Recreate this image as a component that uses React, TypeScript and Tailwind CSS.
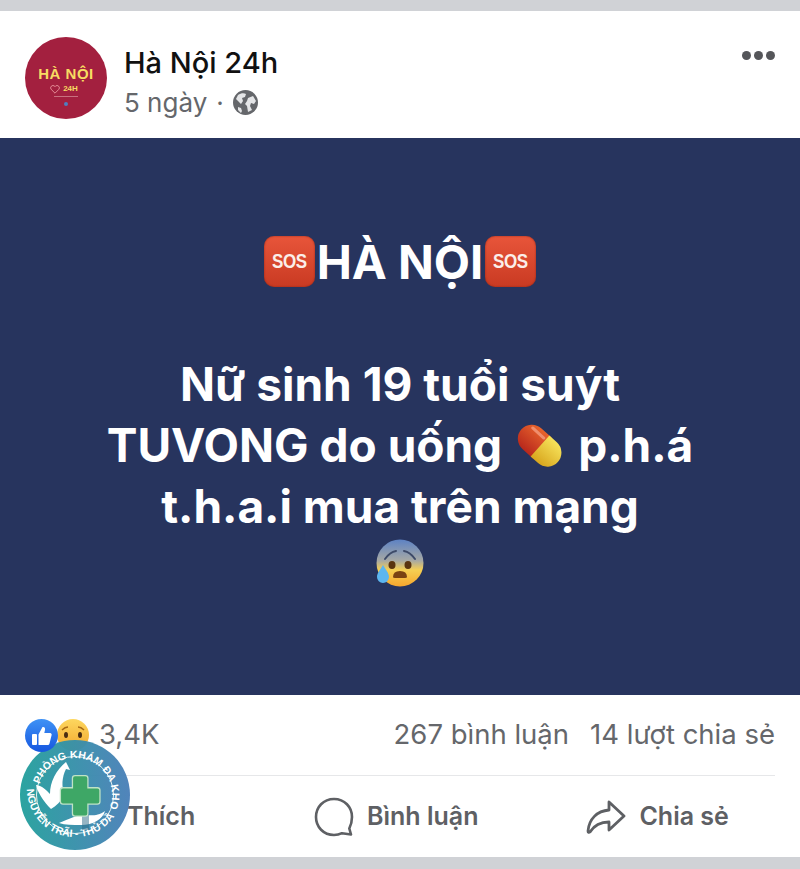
import React from "react";

const F = { fontFamily: "Inter, 'Liberation Sans', sans-serif" };

function Sos() {
  return (
    <span className="inline-flex h-[51px] w-[51px] items-center justify-center rounded-[10px] bg-gradient-to-b from-[#e8553a] to-[#c93a22] text-[20px] font-bold tracking-[-0.5px] text-[#fbeee9] shadow-[inset_0_0_2px_#8e2413] [font-family:'Liberation_Sans',sans-serif]">
      <span className="scale-x-[0.85]">SOS</span>
    </span>
  );
}

function Pill() {
  return (
    <svg width="50" height="50" viewBox="0 0 50 50" className="inline-block">
      <defs>
        <linearGradient id="pr" x1="0" y1="0" x2="0" y2="1">
          <stop offset="0" stopColor="#e8642c" />
          <stop offset="1" stopColor="#b8281c" />
        </linearGradient>
        <linearGradient id="py" x1="0" y1="0" x2="0" y2="1">
          <stop offset="0" stopColor="#f6e25a" />
          <stop offset="1" stopColor="#d8a61e" />
        </linearGradient>
      </defs>
      <g transform="rotate(42 25 25)">
        <path d="M25 11H11a14 14 0 0 0 0 28h14z" transform="translate(3 0) scale(1 1)" fill="url(#pr)" />
        <path d="M28 11h10a14 14 0 0 1 0 28H28z" transform="translate(-3 0)" fill="url(#py)" />
        <rect x="6" y="15" width="18" height="3" rx="1.5" fill="#f6a58a" opacity="0.7" />
      </g>
    </svg>
  );
}

function Fear() {
  return (
    <svg width="48" height="48" viewBox="0 0 48 48" className="block">
      <defs>
        <linearGradient id="fg" x1="0" y1="0" x2="0" y2="1">
          <stop offset="0" stopColor="#5d82c4" />
          <stop offset="0.45" stopColor="#a7a9a4" />
          <stop offset="0.65" stopColor="#f6cf52" />
          <stop offset="1" stopColor="#f6a72e" />
        </linearGradient>
      </defs>
      <circle cx="24" cy="24" r="23.5" fill="url(#fg)" />
      <path d="M9 20q5-7 11-8M39 20q-5-7-11-8" stroke="#3d4a68" strokeWidth="2" fill="none" strokeLinecap="round" />
      <ellipse cx="16" cy="26" rx="3.5" ry="4" fill="#5a3410" />
      <ellipse cx="32" cy="26" rx="3.5" ry="4" fill="#5a3410" />
      <path d="M17 38q0-6 7-6t7 6q0 1-2 1H19q-2 0-2-1z" fill="#7a4212" />
      <path d="M7 26c3 5 6 8 6 12a6 6 0 0 1-12 0c0-4 3-7 6-12z" fill="#5cb6f0" />
    </svg>
  );
}

function Avatar() {
  return (
    <div className="flex h-[82px] w-[82px] shrink-0 flex-col items-center rounded-full bg-[#a3203f] pt-[29px] [font-family:'Liberation_Sans',sans-serif]">
      <span className="text-[15px] font-bold leading-[16px] tracking-[0.5px] text-[#f7dc62]">HÀ NỘI</span>
      <span className="mt-[2px] flex items-center gap-[3px] pr-[4px] text-[8px] font-bold leading-[10px] text-[#f7dc62]">
        <svg width="10" height="9" viewBox="0 0 24 22" fill="none" stroke="#f2a3a8" strokeWidth="2">
          <path d="M12 20 3 11a5.5 5.5 0 0 1 8-8l1 1 1-1a5.500 5.500 0 0 1 8 8z" />
        </svg>
        24H
      </span>
      <span className="mt-[2px] h-px w-[24px] bg-[#c9707f]" />
      <span className="mt-[5px] h-[4px] w-[4px] rounded-full bg-[#4f7ec0]" />
    </div>
  );
}

function Globe() {
  return (
    <svg width="25" height="25" viewBox="0 0 25 25" className="block">
      <circle cx="12.5" cy="12.500" r="12.500" fill="#65676b" />
      <path d="M5 5c3-2 6-2 8-1l-1 3-3 1 1 3-2 3-3-3-2-2zM15 8l5-2 3 5-2 3-3-1-1 3 2 4-4 2-1-6-2-2 2-3zM5 17l3 1 1 3-1 2-3-3z" fill="#e4e5e7" />
    </svg>
  );
}

function Like() {
  return (
    <svg width="33" height="33" viewBox="0 0 33 33" className="block">
      <defs>
        <linearGradient id="lk" x1="0" y1="0" x2="0" y2="1">
          <stop offset="0" stopColor="#3f92f5" />
          <stop offset="1" stopColor="#1657e0" />
        </linearGradient>
      </defs>
      <circle cx="16.500" cy="16.500" r="16.500" fill="url(#lk)" />
      <rect x="7" y="15" width="5" height="11" rx="1" fill="#fff" />
      <path d="M13.500 15.500 17.500 8c2-.5 3 1 2.500 3l-.7 3h5.700c1.500 0 2 1.500 1.500 2.500l-2 8c-.3 1-1 1.500-2 1.500h-9z" fill="#fff" />
    </svg>
  );
}

function Sad() {
  return (
    <svg width="32" height="32" viewBox="0 0 32 32" className="block">
      <defs>
        <linearGradient id="sd" x1="0" y1="0" x2="0" y2="1">
          <stop offset="0" stopColor="#fdd75f" />
          <stop offset="1" stopColor="#f2a72c" />
        </linearGradient>
      </defs>
      <circle cx="16" cy="16" r="16" fill="url(#sd)" />
      <ellipse cx="9" cy="16" rx="2" ry="3" fill="#4a2d12" />
      <ellipse cx="23" cy="16" rx="2" ry="3" fill="#4a2d12" />
      <path d="M5 11q3-3 6-3M27 11q-3-3-6-3" stroke="#a86a14" strokeWidth="1.500" fill="none" />
    </svg>
  );
}

function Clinic() {
  return (
    <svg width="112" height="112" viewBox="0 0 112 112" className="block">
      <defs>
        <linearGradient id="cb" x1="0" y1="0" x2="1" y2="0">
          <stop offset="0" stopColor="#23a09c" />
          <stop offset="1" stopColor="#4a7fb8" />
        </linearGradient>
        <path id="ct" d="M19 56a37 37 0 1 1 74 0" transform="rotate(17 56 56)" />
        <path id="cbt" d="M8 50a48 48 0 0 0 87 28" />
      </defs>
      <circle cx="56" cy="56" r="55" fill="url(#cb)" fillOpacity="0.96" />
      <circle cx="56" cy="56" r="38.500" fill="none" stroke="#e6f3f3" strokeWidth="1" />
      <text fontSize="10.500" fontWeight="700" fill="#fff" letterSpacing="0.100" style={{ fontFamily: "'Liberation Sans', sans-serif" }}>
        <textPath href="#ct" startOffset="0">PHÒNG KHÁM ĐA KHOA</textPath>
      </text>
      <text fontSize="10.500" fontWeight="700" fill="#fff" style={{ fontFamily: "'Liberation Sans', sans-serif" }}>
        <textPath href="#cbt" startOffset="0">NGUYỄN TRÃI - THỦ DẦU MỘT</textPath>
      </text>
      <path d="M32 70c-8-8-14-18-15-24 7 1 10 5 14 9 0-12 6-24 16-32l4 8-4-1c-4 8-5 18-1 26-4 6-9 11-14 14z" fill="#fff" />
      <path d="M40 84c10-4 18-8 24-8 6 0 14 2 22-4-2 8-12 14-24 14-8 0-16 0-22-2z" fill="#fff" />
      <path d="M63 73v18h7V73z" fill="#2c6c8a" opacity="0.5" />
      <path d="M53 45a3 3 0 0 1 3-3h12a3 3 0 0 1 3 3v11h11a3 3 0 0 1 3 3v13a3 3 0 0 1-3 3H71v11a3 3 0 0 1-3 3H56a3 3 0 0 1-3-3V75H42a3 3 0 0 1-3-3V59a3 3 0 0 1 3-3h11z" transform="translate(7 -2) scale(0.86) translate(1 3)" fill="#3ea766" stroke="#bfe3c6" strokeWidth="1.500" />
    </svg>
  );
}

export default function App() {
  return (
    <div style={F} className="relative flex h-[869px] w-[800px] flex-col overflow-hidden bg-[#d0d2d6]">
      <div className="mt-[11px] flex h-[127px] items-start bg-white pl-[25px] pr-[25px] pt-[26px]">
        <Avatar />
        <div className="ml-[17px] flex flex-col">
          <span className="mt-[8px] text-[29px] font-medium leading-[35px] text-[#111]">Hà Nội 24h</span>
          <span className="mt-[7px] flex items-center text-[26px] leading-[31px] text-[#65676b]">
            5 ngày<span className="mx-[9px]">·</span><Globe />
          </span>
        </div>
        <div className="ml-auto mt-[14px] flex gap-[3px]">
          <span className="h-[9px] w-[9px] rounded-full bg-[#55565a]" />
          <span className="h-[9px] w-[9px] rounded-full bg-[#55565a]" />
          <span className="h-[9px] w-[9px] rounded-full bg-[#55565a]" />
        </div>
      </div>

      <div className="flex h-[557px] flex-col items-center bg-[#27345e] pt-[93px] text-[46px] font-bold leading-[61px] text-white">
        <div className="flex h-[61px] items-center">
          <Sos />
          <span className="mx-[2px] text-[47px]">HÀ NỘI</span>
          <Sos />
        </div>
        <div className="mt-[62px] h-[61px]">Nữ sinh 19 tuổi suýt</div>
        <div className="flex h-[61px] items-center gap-[13px]">
          <span>TUVONG do uống</span>
          <Pill />
          <span>p.h.á</span>
        </div>
        <div className="h-[61px]">t.h.a.i mua trên mạng</div>
        <div className="flex h-[48px] items-center pt-[3px]">
          <Fear />
        </div>
      </div>

      <div className="relative flex h-[162px] flex-col bg-white px-[25px]">
        <div className="flex h-[80px] items-center justify-between text-[27.500px] text-[#65676b]">
          <div className="flex items-center">
            <span className="relative z-10"><Like /></span>
            <span className="-ml-[1px] -mt-[1px]"><Sad /></span>
            <span className="ml-[10px]">3,4K</span>
          </div>
          <div className="flex gap-[21px]">
            <span>267 bình luận</span>
            <span>14 lượt chia sẻ</span>
          </div>
        </div>
        <div className="h-[1px] bg-[#e6e7e9]" />
        <div className="flex h-[81px] items-center text-[25px] font-semibold text-[#5e6064]">
          <div className="flex w-[289px] items-center pl-[102px]">
            <span>Thích</span>
          </div>
          <div className="flex items-center gap-[13px]">
            <svg width="40" height="40" viewBox="0 0 40 40" fill="none" stroke="#5e6064" strokeWidth="2.600" strokeLinejoin="round">
              <path d="M20 2C9.500 2 2 10 2 20s7.500 18 18 18c3 0 5.500-.6 8-1.800l9 1.300-1.700-6C37 28 38 24 38 20 38 10 30.500 2 20 2z" />
            </svg>
            <span>Bình luận</span>
          </div>
          <div className="ml-[108px] flex items-center gap-[13px]">
            <svg width="40" height="34" viewBox="0 0 40 34" fill="none" stroke="#5e6064" strokeWidth="2.800" strokeLinejoin="round" strokeLinecap="round">
              <path d="M23 2 38 16 23 30v-8c-8 0-14 2-19 10-1 .8-2 .5-2-1C3 19 11 11 23 10z" />
            </svg>
            <span>Chia sẻ</span>
          </div>
        </div>
      </div>

      <div className="absolute left-[19px] top-[739px]">
        <Clinic />
      </div>
    </div>
  );
}
